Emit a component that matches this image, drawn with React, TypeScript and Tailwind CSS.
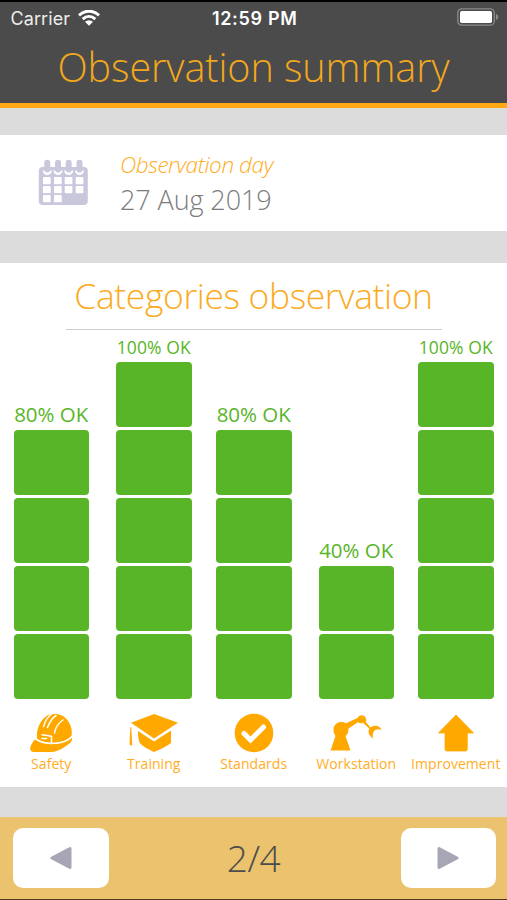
import type { ReactNode } from "react";

type Category = {
  label: string;
  score: number;
  spacing: string;
  scoreClass: string;
  icon: ReactNode;
};

function HelmetIcon() {
  return (
    <svg viewBox="0 0 44 40" className="h-10 w-11">
      <path
        d="M8 26C7 16 11 8 17 3.500C20 1 25 .6 30 1.500C36 3 40 8 42 14C43 18 43 21 42.500 23C38 28.500 28 31 20 29.500C15 29 11 28 8 26Z"
        fill="#ffa800"
      />
      <path
        d="M6 26.500C11 30 17 31 23 31C31 31 38 29 43 24.500C43.500 28 41 30.500 37 33C31 37 27 39 21 39H6C2 39 .5 37 1.500 34C2.500 30.500 4 28.500 6 26.500Z"
        fill="#ffa800"
      />
      <g fill="none" stroke="white" strokeWidth="1.500" strokeLinecap="round" strokeLinejoin="round">
        <path d="M6.500 25.500C11 29.500 17 30.500 22 30.500C31 30.500 39 28 43 23.500" />
        <path d="M13 21.700L22.500 23.300V29.500M13 25.500H17.500" />
        <path d="M14.500 13.500C16 8.500 18 4.500 22 1.500" />
        <path d="M18.500 14.500C20.500 9.500 23 5 27 2.500" />
        <path d="M25.500 20C26.500 14 29.500 10 34 7" />
      </g>
    </svg>
  );
}

function CapIcon() {
  return (
    <svg viewBox="0 0 50 40" className="h-10 w-[50px]">
      <g fill="#ffa800">
        <path d="M25 1L49 9.700L25 25.500L2 9.700Z" />
        <path d="M9 18L25 28.500L42 17.500V30C37.500 33.500 31 36.500 25 39C19 36 13.500 33.500 10.500 29.500C9 25 9 22 9 18Z" />
        <path d="M1.300 14.500L2.200 14L3.200 31C2.800 33 1 33 .6 31Z" />
      </g>
    </svg>
  );
}

function CheckIcon() {
  return (
    <svg viewBox="0 0 40 40" className="size-10">
      <circle cx="20" cy="20" r="19.300" fill="#ffa800" />
      <path
        d="M10 20.500L16.500 27L29.500 14"
        fill="none"
        stroke="white"
        strokeWidth="5"
        strokeLinecap="round"
        strokeLinejoin="miter"
      />
    </svg>
  );
}

function RobotArmIcon() {
  return (
    <svg viewBox="0 0 52 40" className="h-10 w-[52px]">
      <path
        d="M.5 37.500L5.500 23C1.500 17.500 3.500 9.500 10.500 9C13 9 14.500 9.500 16 10.200L27.500 5C29 1.500 34 1.500 35.500 4.500C36.500 6 36.300 7.500 35.800 9L40.500 14.500C44 11.500 50 12 51.500 17C48 15.500 45.500 16.500 44.200 18C42.500 20 42.500 22.500 43 25.500C39 23 37.500 18.500 39.300 15.500L33 9.800C31 10.500 29.500 10.200 28 9.200L18.500 15.500C18.500 19 18 21 15.500 23L20.500 37.500Z"
        fill="#ffa800"
      />
    </svg>
  );
}

function ArrowIcon() {
  return (
    <svg viewBox="0 0 38 40" className="h-10 w-[38px]">
      <path
        d="M19 2L36.500 20H30.300V36Q30.300 38 28.300 38H10Q8 38 8 36V20H1.500Z"
        fill="#ffa800"
        stroke="#ffa800"
        strokeWidth=".8"
        strokeLinejoin="round"
      />
    </svg>
  );
}

function CalendarIcon() {
  return (
    <svg viewBox="0 0 50 48" className="h-12 w-[50px] shrink-0">
      <rect x=".8" y="8" width="49" height="38" rx="4" fill="#c9c7dc" />
      {[9.3, 20, 30.7, 41.5].map((x) => (
        <g key={x}>
          <circle cx={x} cy="11.500" r="4.500" fill="white" />
          <rect x={x - 4.7} y="8" width="9.400" height="3.500" fill="#c9c7dc" />
          <rect x={x - 3} y=".8" width="6" height="12.700" rx="3" fill="#c9c7dc" />
        </g>
      ))}
      {[5, 16, 26.7, 37.7].map((x, col) =>
        [18, 27, 36].map((y, row) =>
          row === 2 && col > 1 ? null : (
            <rect key={`${x}-${y}`} x={x} y={y} width="7.700" height="7.300" rx=".8" fill="white" />
          ),
        ),
      )}
    </svg>
  );
}

const categories: Category[] = [
  {
    label: "Safety",
    score: 80,
    spacing: "ml-[13.500px]",
    scoreClass: "text-[20.500px] leading-[31px]",
    icon: <HelmetIcon />,
  },
  {
    label: "Training",
    score: 100,
    spacing: "ml-[27px]",
    scoreClass: "text-[17.500px] leading-[29px] tracking-[0.1px]",
    icon: <CapIcon />,
  },
  {
    label: "Standards",
    score: 80,
    spacing: "ml-[24.500px]",
    scoreClass: "text-[20.500px] leading-[31px]",
    icon: <CheckIcon />,
  },
  {
    label: "Workstation",
    score: 40,
    spacing: "ml-[27px]",
    scoreClass: "text-[20.500px] leading-[31px]",
    icon: <RobotArmIcon />,
  },
  {
    label: "Improvement",
    score: 100,
    spacing: "ml-6",
    scoreClass: "text-[17.500px] leading-[29px] tracking-[0.1px]",
    icon: <ArrowIcon />,
  },
];

function StatusBar() {
  return (
    <div className="grid h-[34px] grid-cols-[1fr_auto_1fr] items-center pr-[8px] pb-0.5 pl-[10.500px] font-['Inter'] text-white">
      <div className="flex items-center gap-2">
        <span className="text-[18px] tracking-[0.1px] text-[#ededed]">Carrier</span>
        <svg viewBox="0 0 22 16" className="h-4 w-[22px]" fill="none" stroke="white" strokeWidth="3">
          <path d="M1 5.300C7-.2 15-.2 21 5.300" />
          <path d="M4.700 9.200C8.500 5.700 13.500 5.700 17.300 9.200" />
          <path d="M11 15.800L7 11.800C9.500 9.800 12.500 9.800 15 11.800Z" fill="white" stroke="none" />
        </svg>
      </div>
      <span className="text-[18px] font-semibold tracking-[0.7px]">12:59 PM</span>
      <svg viewBox="0 0 42 18" className="-mt-0.5 h-[18px] w-[42px] justify-self-end">
        <rect x=".8" y=".8" width="36.500" height="16.400" rx="4" fill="none" stroke="#8a8a8a" strokeWidth="1.300" />
        <rect x="3" y="3" width="32" height="12" rx="1.800" fill="white" />
        <path d="M39 6C42 7 42 11 39 12Z" fill="#8a8a8a" />
      </svg>
    </div>
  );
}

function CategoryColumn({ category }: { category: Category }) {
  const blocks = Array.from({ length: category.score / 20 });

  return (
    <div className={`flex w-[75.500px] shrink-0 flex-col items-center justify-end ${category.spacing}`}>
      <span className={`whitespace-nowrap text-[#58b527] ${category.scoreClass}`}>
        {category.score}% OK
      </span>
      <div className="flex w-full flex-col gap-[3.500px]">
        {blocks.map((_, i) => (
          <div key={i} className="h-[64.500px] rounded-[4px] bg-[#58b527]" />
        ))}
      </div>
      <div className="mt-[14.500px] flex h-10 justify-center">{category.icon}</div>
      <span className="h-[34px] text-[14px] leading-[22px] tracking-[0.05px] whitespace-nowrap text-[#ffad1f]">
        {category.label}
      </span>
    </div>
  );
}

export default function App() {
  return (
    <div className="flex h-[900px] w-[507px] flex-col overflow-hidden border-t-2 border-b border-t-black border-b-[#4b3b1b] bg-[#dcdcdc] font-['Open_Sans',sans-serif]">
      <header className="h-[106px] shrink-0 border-b-[5px] border-[#ffa914] bg-[#4b4b4b]">
        <StatusBar />
        <h1 className="text-center text-[39.500px] leading-[62px] font-light tracking-[-0.05px] whitespace-nowrap text-[#f2a81d]">
          Observation summary
        </h1>
      </header>

      <section className="mt-[27px] flex h-24 shrink-0 items-center gap-8 bg-white pl-[38px]">
        <CalendarIcon />
        <div className="font-light">
          <p className="text-[22.500px] leading-8 tracking-[-0.4px] text-[#ffac20] italic">Observation day</p>
          <p className="text-[27px] leading-[37px] tracking-[-0.1px] text-[#7c7c7c]">27 Aug 2019</p>
        </div>
      </section>

      <section className="mt-8 flex h-[524px] shrink-0 flex-col bg-white">
        <h2 className="mx-auto h-[67px] w-[376px] border-b border-[#cfcfcf] text-center text-[35.500px] leading-[64px] font-light tracking-[-0.4px] whitespace-nowrap text-[#fbab22]">
          Categories observation
        </h2>
        <div className="flex flex-1">
          {categories.map((category) => (
            <CategoryColumn key={category.label} category={category} />
          ))}
        </div>
      </section>

      <footer className="mt-[30px] flex flex-1 items-center justify-between bg-[#ebc36e] pr-[11px] pl-[13px]">
        <button type="button" className="flex h-[60px] w-[95.500px] items-center justify-center rounded-[10px] bg-white">
          <svg viewBox="0 0 22 24" className="h-6 w-[22px]">
            <path d="M20 2.500V21.500L2 12Z" fill="#a7a6b5" stroke="#a7a6b5" strokeWidth="3" strokeLinejoin="round" />
          </svg>
        </button>
        <span className="pr-[2px] text-[37px] font-light tracking-[-0.4px] text-[#4c4c4c]">2/4</span>
        <button type="button" className="flex h-[60px] w-[95.500px] items-center justify-center rounded-[10px] bg-white">
          <svg viewBox="0 0 22 24" className="h-6 w-[22px]">
            <path d="M2 2.500V21.500L20 12Z" fill="#a7a6b5" stroke="#a7a6b5" strokeWidth="3" strokeLinejoin="round" />
          </svg>
        </button>
      </footer>
    </div>
  );
}
